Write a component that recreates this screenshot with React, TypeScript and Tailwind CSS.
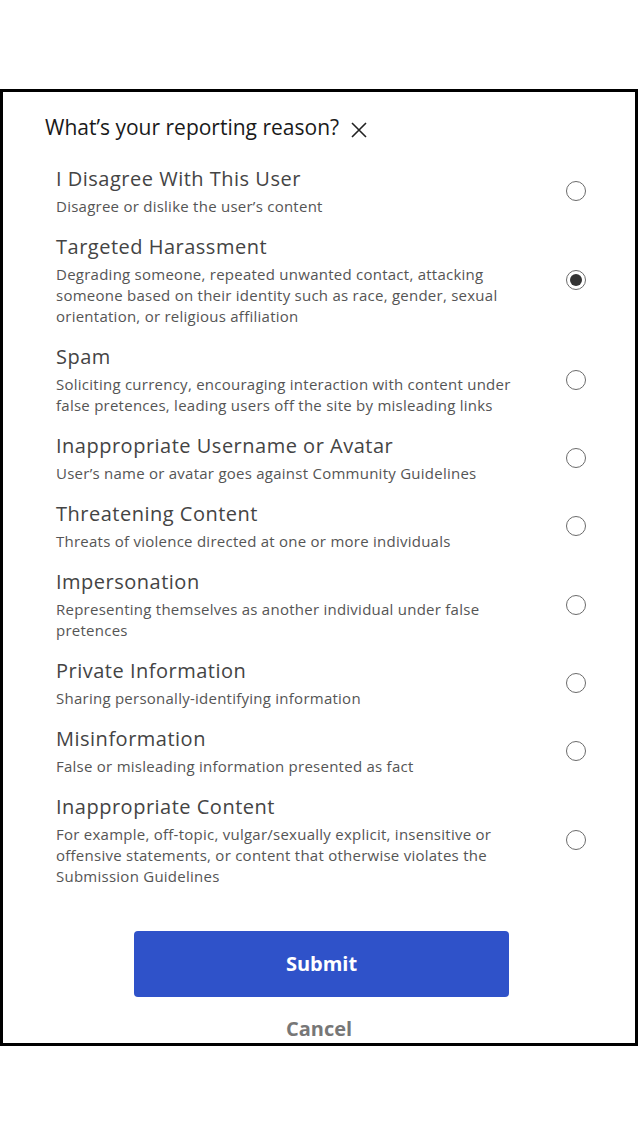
const reasons = [
  { title: 'I Disagree With This User', desc: 'Disagree or dislike the user’s content' },
  {
    title: 'Targeted Harassment',
    desc: 'Degrading someone, repeated unwanted contact, attacking someone based on their identity such as race, gender, sexual orientation, or religious affiliation',
  },
  {
    title: 'Spam',
    desc: 'Soliciting currency, encouraging interaction with content under false pretences, leading users off the site by misleading links',
  },
  { title: 'Inappropriate Username or Avatar', desc: 'User’s name or avatar goes against Community Guidelines' },
  { title: 'Threatening Content', desc: 'Threats of violence directed at one or more individuals' },
  { title: 'Impersonation', desc: 'Representing themselves as another individual under false pretences' },
  { title: 'Private Information', desc: 'Sharing personally-identifying information' },
  { title: 'Misinformation', desc: 'False or misleading information presented as fact' },
  {
    title: 'Inappropriate Content',
    desc: 'For example, off-topic, vulgar/sexually explicit, insensitive or offensive statements, or content that otherwise violates the Submission Guidelines',
  },
];

function Radio({ checked }: { checked: boolean }) {
  return (
    <span className="flex h-[20px] w-[20px] items-center justify-center rounded-full border-[1.5px] border-[#6b6b6b]">
      {checked && <span className="h-[12px] w-[12px] rounded-full bg-[#333]" />}
    </span>
  );
}

export default function App() {
  return (
    <div className="min-h-[1136px] bg-white pt-[89px] font-['Open_Sans',sans-serif]">
      <div className="h-[957px] w-[638px] overflow-hidden border-[3px] border-black">
        <div className="flex items-center gap-[11px] pl-[42px] pt-[21px]">
          <h2 className="text-[21px] leading-[28px] font-medium text-[#1a1a1a]">What’s your reporting reason?</h2>
          <svg width="18" height="18" viewBox="0 0 18 18" className="mt-[6px]" stroke="#222" strokeWidth="1.6">
            <path d="M2 2 L16 16 M16 2 L2 16" />
          </svg>
        </div>

        <ul className="mt-[24px] flex flex-col gap-[16px]">
          {reasons.map((r, i) => (
            <li key={r.title} className="flex items-center pl-[53px]">
              <div className="w-[478px]">
                <div className="text-[20px] leading-[28px] tracking-[0.5px] text-[#444]">{r.title}</div>
                <p className="mt-[3px] text-[15px] leading-[21px] tracking-[0.25px] text-[#555]">{r.desc}</p>
              </div>
              <div className="ml-[32px]">
                <Radio checked={i === 1} />
              </div>
            </li>
          ))}
        </ul>

        <div className="mt-[44px] flex flex-col items-center">
          <button className="ml-[5px] h-[66px] w-[375px] rounded-[4px] bg-[#2f52c9] text-[20px] font-bold text-white">
            Submit
          </button>
          <button className="mt-[18px] text-[20px] leading-[28px] font-bold text-[#777]">Cancel</button>
        </div>
      </div>
    </div>
  );
}
